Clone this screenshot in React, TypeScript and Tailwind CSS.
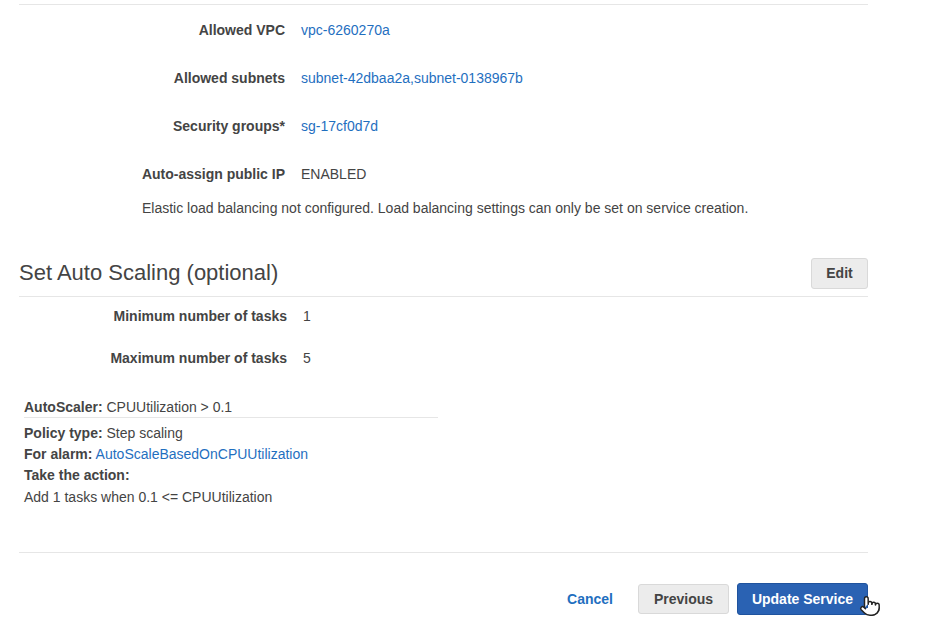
import React from 'react';
import { Pointer } from 'lucide-react';

const networkRows = [
  { label: 'Allowed VPC', value: 'vpc-6260270a', link: true },
  { label: 'Allowed subnets', value: 'subnet-42dbaa2a,subnet-0138967b', link: true },
  { label: 'Security groups*', value: 'sg-17cf0d7d', link: true },
  { label: 'Auto-assign public IP', value: 'ENABLED', link: false },
];

const scalingRows = [
  { label: 'Minimum number of tasks', value: '1' },
  { label: 'Maximum number of tasks', value: '5' },
];

export default function App() {
  return (
    <div
      className="w-[933px] h-[625px] bg-white text-[14px] text-[#444] overflow-hidden"
      style={{ fontFamily: '"Liberation Sans", Arial, sans-serif' }}
    >
      <div className="ml-[19px] w-[849px]">
        {/* Network summary */}
        <div className="mt-[4px] border-t border-[#e6e6e6] pt-[1px]">
          {networkRows.map(row => (
            <div key={row.label} className="flex h-[48px] items-center">
              <div className="w-[266px] text-right font-bold">{row.label}</div>
              <div className={`ml-[16px] ${row.link ? 'text-[#1f6fbf]' : 'text-[#444]'}`}>
                {row.value}
              </div>
            </div>
          ))}
          <p className="ml-[123px] leading-[20px]">
            Elastic load balancing not configured. Load balancing settings can only be set on service creation.
          </p>
        </div>

        {/* Auto scaling */}
        <div className="mt-[40px] flex items-start justify-between">
          <h2 className="pt-[2px] text-[22px] leading-[26px] text-[#444]">Set Auto Scaling (optional)</h2>
          <button className="h-[31px] w-[57px] rounded-[3px] border border-[#d9d9d9] bg-[#ececec] font-bold text-[#444]">
            Edit
          </button>
        </div>
        <div className="mt-[7px] border-t border-[#e6e6e6]" />

        <div className="pt-[9px]">
          {scalingRows.map((row, i) => (
            <div key={row.label} className={`flex leading-[20px] ${i > 0 ? 'mt-[22px]' : ''}`}>
              <div className="w-[268px] text-right font-bold">{row.label}</div>
              <div className="ml-[16px]">{row.value}</div>
            </div>
          ))}
        </div>

        <div className="mt-[29px] ml-[5px] w-[414px]">
          <div className="border-b border-[#e6e6e6] leading-[20px]">
            <span className="font-bold">AutoScaler:</span> CPUUtilization &gt; 0.1
          </div>
          <div className="mt-[5px] leading-[21px]">
            <div>
              <span className="font-bold">Policy type:</span> Step scaling
            </div>
            <div>
              <span className="font-bold">For alarm:</span>{' '}
              <span className="text-[#1f6fbf]">AutoScaleBasedOnCPUUtilization</span>
            </div>
            <div className="font-bold">Take the action:</div>
            <div className="pt-[1px]">Add 1 tasks when 0.1 &lt;= CPUUtilization</div>
          </div>
        </div>

        {/* Footer actions */}
        <div className="mt-[44px] border-t border-[#e6e6e6]" />
        <div className="mt-[30px] flex items-center justify-end">
          <button className="mr-[25px] font-bold text-[#1f6fbf]">Cancel</button>
          <button className="h-[30px] w-[91px] rounded-[3px] border border-[#d9d9d9] bg-[#ececec] font-bold text-[#444]">
            Previous
          </button>
          <div className="relative ml-[8px]">
            <button className="h-[32px] w-[131px] rounded-[3px] border border-[#1f539e] bg-[#2a62b3] font-bold text-white">
              Update Service
            </button>
            <Pointer
              className="absolute left-[122px] top-[12px] h-[22px] w-[22px] text-[#222]"
              fill="white"
              strokeWidth={1.6}
            />
          </div>
        </div>
      </div>
    </div>
  );
}
